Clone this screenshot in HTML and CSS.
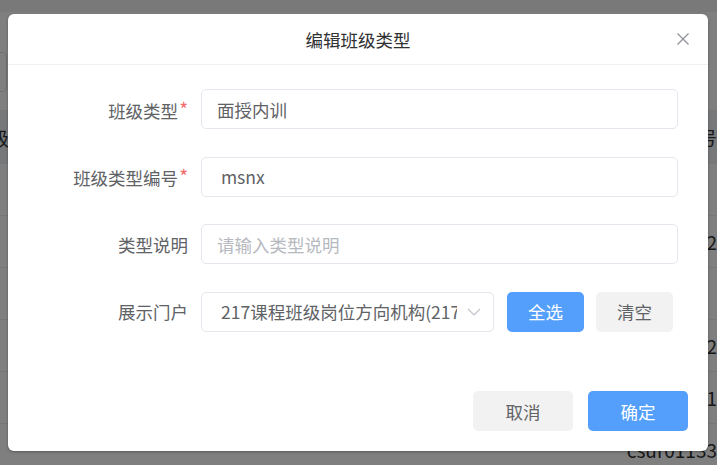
FILE: index.html
```html
<!DOCTYPE html>
<html lang="zh-CN">
<head>
<meta charset="utf-8">
<title>编辑班级类型</title>
<link rel="stylesheet" href="styles.css">
</head>
<body>
<div class="page">
  <div class="topbar"></div>
  <div class="search"><div class="search-input"></div></div>
  <div class="table">
    <div class="tr th"><div class="c1">班级</div><div class="c2"></div><div class="c3 hd">编号</div></div>
    <div class="tr"><div class="c1"></div><div class="c2"></div><div class="c3"></div></div>
    <div class="tr"><div class="c1"></div><div class="c2"></div><div class="c3">csur01132</div></div>
    <div class="tr"><div class="c1"></div><div class="c2"></div><div class="c3"></div></div>
    <div class="tr"><div class="c1"></div><div class="c2"></div><div class="c3">csur01122</div></div>
    <div class="tr"><div class="c1"></div><div class="c2"></div><div class="c3">csur01121</div></div>
    <div class="tr"><div class="c1"></div><div class="c2"></div><div class="c3">csur01133</div></div>
  </div>
</div>
<div class="mask"></div>
<div class="dialog">
  <div class="dlg-header">
    <span></span>
    <span class="dlg-title">编辑班级类型</span>
    <button class="dlg-close" aria-label="关闭">
      <svg width="12" height="12" viewBox="0 0 12 12"><path d="M0.5 0.5 L11.5 11.5 M11.5 0.5 L0.5 11.5" stroke="#909399" stroke-width="1.3" fill="none"/></svg>
    </button>
  </div>
  <div class="dlg-body">
    <div class="form-row">
      <label class="form-label">班级类型<span class="req">*</span></label>
      <div class="input">面授内训</div>
    </div>
    <div class="form-row">
      <label class="form-label">班级类型编号<span class="req">*</span></label>
      <div class="input">&nbsp;msnx</div>
    </div>
    <div class="form-row">
      <label class="form-label">类型说明</label>
      <div class="input placeholder">请输入类型说明</div>
    </div>
    <div class="form-row">
      <label class="form-label">展示门户</label>
      <div class="select">
        <span class="select-text">217课程班级岗位方向机构(217)</span>
        <svg class="select-arrow" width="14" height="8" viewBox="0 0 14 8"><path d="M1 1 L7 7 L13 1" stroke="#c0c4cc" stroke-width="1.2" fill="none"/></svg>
      </div>
      <button class="btn btn-primary btn-sm">全选</button>
      <button class="btn btn-default btn-sm">清空</button>
    </div>
  </div>
  <div class="dlg-footer">
    <button class="btn btn-default btn-lg">取消</button>
    <button class="btn btn-primary btn-lg">确定</button>
  </div>
</div>
</body>
</html>
```

FILE: styles.css
```css
* { box-sizing: border-box; }
html, body { margin: 0; padding: 0; }
body {
  width: 717px;
  height: 465px;
  overflow: hidden;
  position: relative;
  background: #fff;
  font-family: "Noto Sans CJK SC", "Noto Sans", sans-serif;
  color: #606266;
}

/* background page */
.page { width: 717px; }
.topbar { height: 12px; background: #f3f3f3; }
.search { height: 98px; padding-top: 40px; }
.search-input {
  width: 47px; height: 40px; margin-left: -40px;
  border: 1px solid #dcdfe6; border-radius: 5px;
}
.table { border-top: 1px solid #ebeef5; }
.tr {
  display: flex; height: 52px; align-items: center;
  border-bottom: 1px solid #ebeef5;
  font-size: 19px; color: #303133;
}
.th { background: #eef0f3; height: 53px; }
.c1 { width: 9px; display: flex; justify-content: flex-end; white-space: nowrap; }
.c2 { width: 623px; }
.c3 { white-space: nowrap; }
.c3.hd { margin-left: 58px; font-size: 18px; }

.mask { position: absolute; inset: 0; background: rgba(0,0,0,0.5); }

/* dialog */
.dialog {
  position: absolute;
  left: 8px; top: 14px;
  width: 700px; height: 437px;
  background: #fff;
  border-radius: 6px;
  box-shadow: 0 1px 3px rgba(0,0,0,0.3);
  display: flex; flex-direction: column;
}
.dlg-header {
  height: 51px;
  border-bottom: 1px solid #f0f0f0;
  display: grid;
  grid-template-columns: 1fr auto 1fr;
  align-items: center;
}
.dlg-title { font-size: 17.5px; color: #303133; line-height: 24px; padding-top: 1px; }
.dlg-close {
  justify-self: end;
  margin-right: 19px;
  width: 12px; height: 12px;
  padding: 0; border: 0; background: none;
  display: flex;
}
.dlg-body { padding: 24px 30px 0 0; }
.form-row {
  display: flex; align-items: center;
  height: 40px;
  margin-bottom: 27.5px;
}
.form-label {
  width: 193px;
  padding-right: 13px;
  text-align: right;
  font-size: 17.5px;
  color: #606266;
  white-space: nowrap;
}
.req { color: #f56c6c; position: relative; top: -1px; font-size: 19px; margin-left: 1px; }
.input {
  flex: 1;
  height: 40px;
  border: 1px solid #e4e7ed;
  border-radius: 5px;
  padding: 0 15px;
  display: flex; align-items: center;
  font-size: 17.5px;
  color: #606266;
  white-space: pre;
}
.placeholder { color: #b6b9c0; }
.select {
  width: 293px;
  height: 40px;
  border: 1px solid #e4e7ed;
  border-radius: 5px;
  display: flex; align-items: center;
  padding-left: 19px;
  font-size: 17.5px;
  color: #606266;
  overflow: hidden;
}
.select-text {
  width: 236px;
  overflow: hidden;
  white-space: nowrap;
}
.select-arrow { margin-left: 10px; margin-top: 1px; }

.btn {
  border: 0;
  border-radius: 5px;
  font-family: inherit;
  font-size: 17.5px;
  padding: 0;
  display: inline-flex; align-items: center; justify-content: center;
}
.btn-primary { background: #539ffb; color: #fff; }
.btn-default { background: #f2f2f2; color: #606266; }
.btn-sm { width: 77px; height: 40px; margin-left: 13px; }
.btn-sm + .btn-sm { margin-left: 12px; }
.dlg-footer {
  margin-top: auto;
  padding: 0 20px 20px;
  display: flex; justify-content: flex-end; gap: 15px;
}
.btn-lg { width: 100px; height: 40px; }
```
